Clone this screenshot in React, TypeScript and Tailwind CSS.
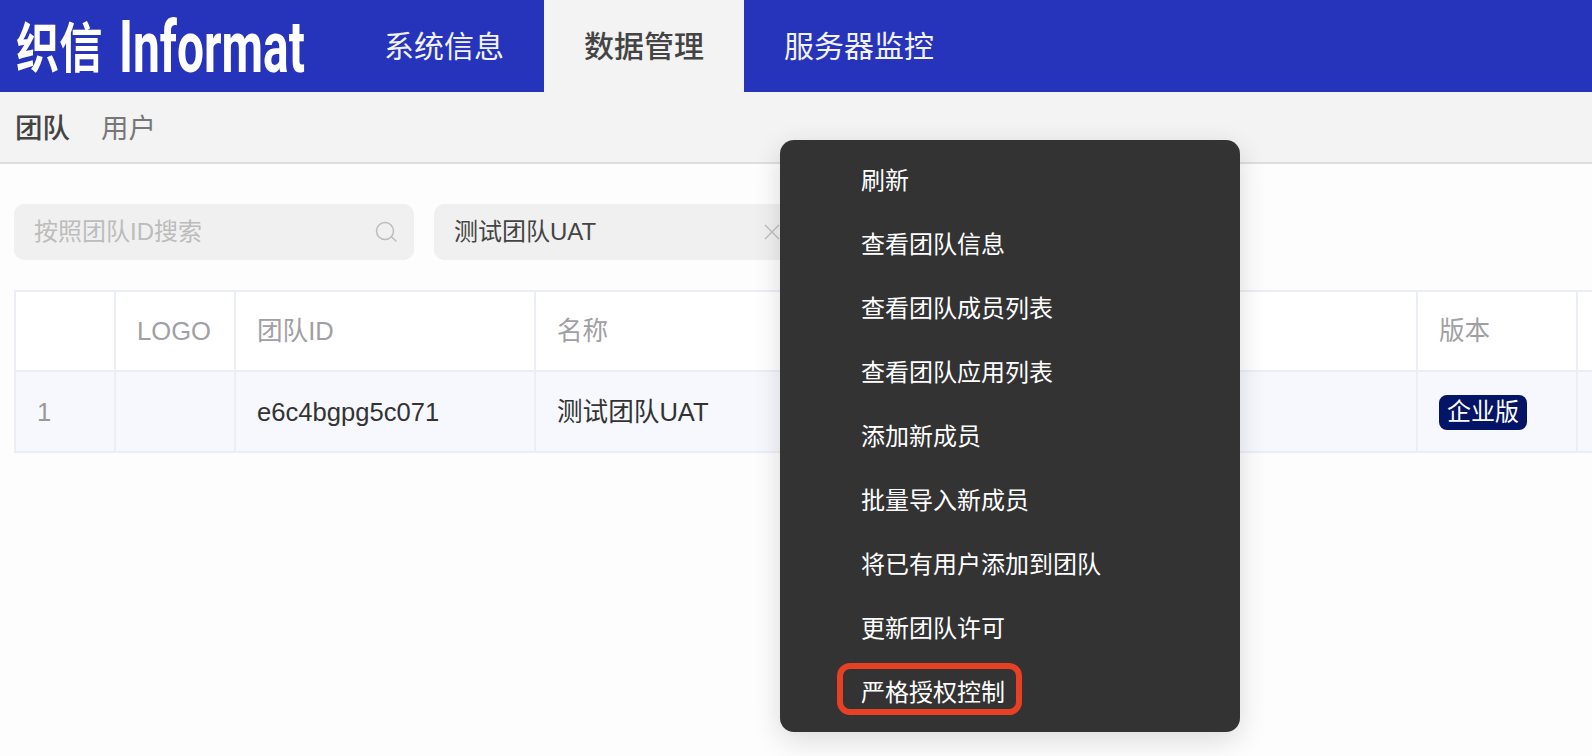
const FONT = "font-['Liberation_Sans','Noto_Sans_CJK_SC',sans-serif]";

const MENU_ITEMS = [
  "刷新",
  "查看团队信息",
  "查看团队成员列表",
  "查看团队应用列表",
  "添加新成员",
  "批量导入新成员",
  "将已有用户添加到团队",
  "更新团队许可",
  "严格授权控制",
];

function Logo() {
  return (
    <div className="relative h-[92px] w-[344px] shrink-0 overflow-hidden text-white">
      <span className="absolute left-[16px] top-[10px] origin-left scale-x-[0.8] text-[54px] leading-[70px] font-bold font-['Noto_Sans_CJK_SC',sans-serif]">
        织信
      </span>
      <span className="absolute left-[119px] top-[8px] origin-left scale-x-[0.665] text-[72px] leading-[80px] font-bold font-['Roboto',sans-serif]">
        Informat
      </span>
    </div>
  );
}

function Header() {
  return (
    <header className="flex h-[92px] bg-[#2633bb]">
      <Logo />
      <div className="flex h-full w-[200px] items-center justify-center text-[30px] text-[#f2f2fa]">系统信息</div>
      <div className="flex h-full w-[200px] items-center justify-center bg-[#f3f3f3] text-[30px] font-medium text-[#444]">
        数据管理
      </div>
      <div className="flex h-full w-[230px] items-center justify-center text-[30px] text-[#f2f2fa]">服务器监控</div>
    </header>
  );
}

function SubNav() {
  return (
    <nav className="flex h-[72px] items-center gap-[31px] border-b-2 border-[#dedede] bg-[#f3f3f3] pl-[15px] pt-[3px] text-[27.5px]">
      <span className="font-medium text-[#444]">团队</span>
      <span className="text-[#777]">用户</span>
    </nav>
  );
}

function SearchIcon() {
  return (
    <svg viewBox="0 0 24 24" fill="none" stroke="#bcbcbc" strokeWidth="1.5" className="h-[24px] w-[24px]">
      <circle cx="10" cy="11" r="8.5" />
      <path d="M16.5 17l4.5 4" strokeLinecap="round" />
    </svg>
  );
}

function ClearIcon() {
  return (
    <svg viewBox="0 0 16 16" fill="none" stroke="#bcbcbc" strokeWidth="1.3" className="h-[16px] w-[16px]">
      <path d="M1 1l14 14M15 1L1 15" />
    </svg>
  );
}

function Filters() {
  return (
    <div className="flex gap-[20px]">
      <div className="flex h-[56px] w-[400px] items-center justify-between rounded-[10px] bg-[#f0f0f0] pl-[20px] pr-[15px]">
        <span className="text-[24px] text-[#bcbcbc]">按照团队ID搜索</span>
        <SearchIcon />
      </div>
      <div className="flex h-[56px] w-[400px] items-center justify-between rounded-[10px] bg-[#f0f0f0] pl-[20px] pr-[54px]">
        <span className="text-[24px] text-[#444]">测试团队UAT</span>
        <ClearIcon />
      </div>
    </div>
  );
}

function TeamTable() {
  const cell = "flex items-center border-r-2 border-[#eceef7] pl-[21px] pt-[1px] text-[25.6px]";
  const head = `${cell} text-[#a0a0a4]`;
  const body = `${cell} text-[#333]`;
  return (
    <div className="mt-[30px] w-[1640px] border-2 border-[#eceef7]">
      <div className="grid h-[78px] grid-cols-[100px_120px_300px_882px_160px_1fr] bg-white">
        <div className={head} />
        <div className={head}>LOGO</div>
        <div className={head}>团队ID</div>
        <div className={head}>名称</div>
        <div className={head}>版本</div>
        <div className={head} />
      </div>
      <div className="grid h-[81px] grid-cols-[100px_120px_300px_882px_160px_1fr] border-t-2 border-[#eceef7] bg-[#f6f8fe]">
        <div className={`${cell} text-[#999]`}>1</div>
        <div className={body} />
        <div className={body}>e6c4bgpg5c071</div>
        <div className={body}>测试团队UAT</div>
        <div className={body}>
          <span className="flex h-[35px] items-center rounded-[8px] bg-[#041466] px-[8px] text-[24px] text-white">企业版</span>
        </div>
        <div className={body} />
      </div>
    </div>
  );
}

function ContextMenu() {
  return (
    <div className="absolute left-[780px] top-[140px] w-[460px] rounded-[14px] bg-[#333] pb-[9px] pt-[7px] shadow-[0_8px_28px_rgba(0,0,0,0.14)]">
      {MENU_ITEMS.map((item, index) => (
        <div key={item} className="relative flex h-[64px] items-center pl-[81px] pt-[3px] text-[24px] text-white">
          {item}
          {index === MENU_ITEMS.length - 1 && (
            <div className="absolute left-[57px] top-[4px] h-[52px] w-[185px] rounded-[13px] border-[6px] border-[#e84025]" />
          )}
        </div>
      ))}
    </div>
  );
}

export default function App() {
  return (
    <div className={`relative h-[756px] w-[1592px] overflow-hidden bg-[#fdfdfd] ${FONT}`}>
      <Header />
      <SubNav />
      <main className="pl-[14px] pt-[40px]">
        <Filters />
        <TeamTable />
      </main>
      <ContextMenu />
    </div>
  );
}
